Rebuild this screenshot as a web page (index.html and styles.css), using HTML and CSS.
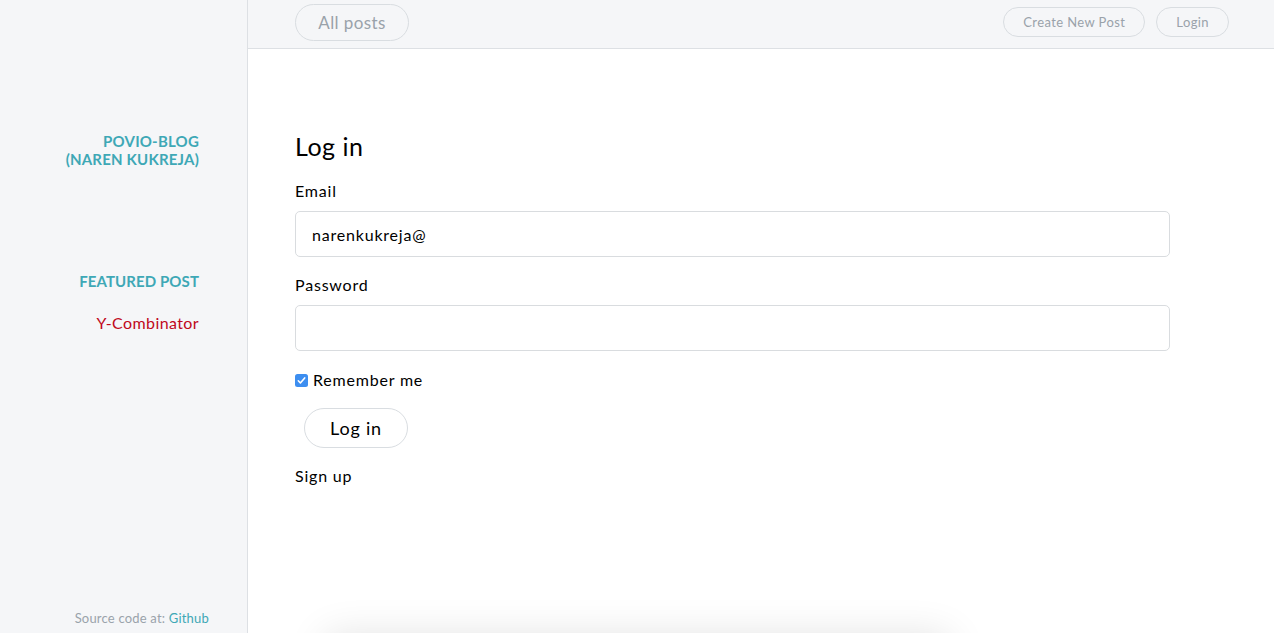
FILE: index.html
```html
<!DOCTYPE html>
<html>
<head>
<meta charset="utf-8">
<link rel="stylesheet" href="styles.css">
</head>
<body>
<div class="app">
  <aside class="sidebar">
    <div class="brand">POVIO-BLOG<br>(NAREN KUKREJA)</div>
    <div class="featured">
      <div class="featured-title">FEATURED POST</div>
      <a class="featured-link">Y-Combinator</a>
    </div>
    <div class="source">Source code at: <a class="gh">Github</a></div>
  </aside>
  <div class="main">
    <header class="topbar">
      <button class="pill pill-lg">All posts</button>
      <div class="right">
        <button class="pill pill-sm">Create New Post</button>
        <button class="pill pill-sm">Login</button>
      </div>
    </header>
    <section class="content">
      <h1 class="title">Log in</h1>
      <label class="label">Email</label>
      <input class="field" type="text" value="narenkukreja@">
      <label class="label">Password</label>
      <input class="field" type="password">
      <label class="remember"><span class="check"><svg width="13" height="13" viewBox="0 0 13 13"><rect width="13" height="13" rx="2.5" fill="#3d8ef0"/><path d="M3.3 6.8 L5.4 9 L9.7 3.9" stroke="#fff" stroke-width="1.6" fill="none" stroke-linecap="round" stroke-linejoin="round"/></svg></span>Remember me</label>
      <button class="pill submit">Log in</button>
      <a class="signup">Sign up</a>
      <div class="shadowbox"></div>
    </section>
  </div>
</div>
</body>
</html>
```
FILE: styles.css
```css
* { box-sizing: border-box; }
html, body { margin: 0; height: 100%; overflow: hidden; }
body { font-family: "Lato", "Open Sans", sans-serif; color: #111; background: #fff; letter-spacing: 0.4px; }
.app { display: flex; height: 633px; }
.sidebar {
  width: 248px; flex: none; background: #f5f6f8; border-right: 1px solid #dde0e4;
  display: flex; flex-direction: column; align-items: flex-end; padding: 132px 48px 0 0;
}
.brand { font-weight: 700; font-size: 15px; line-height: 18px; color: #3ea8b6; text-align: right; letter-spacing: 0.2px; }
.featured { margin-top: 104px; text-align: right; }
.featured-title { font-weight: 700; font-size: 15px; color: #3ea8b6; line-height: 18px; letter-spacing: 0.1px; }
.featured-link { display: block; margin-top: 23px; color: #c0081b; font-size: 16px; line-height: 20px; }
.source { margin-top: auto; margin-bottom: 7px; margin-right: -10px; font-size: 13px; color: #9aa3ab; line-height: 16px; letter-spacing: 0.2px; }
.gh { color: #3ea8b6; }
.main { flex: 1; display: flex; flex-direction: column; min-width: 0; }
.topbar {
  height: 49px; flex: none; background: #f5f6f8; border-bottom: 1px solid #dde0e4;
  display: flex; align-items: flex-start; justify-content: space-between; padding: 4px 45px 0 47px;
}
.right { display: flex; gap: 11px; padding-top: 3px; }
.pill {
  background: transparent; border: 1px solid #d9dde1; border-radius: 999px; font-family: inherit; cursor: pointer; letter-spacing: inherit;
}
.pill-lg { height: 37px; width: 114px; font-size: 17px; color: #9aa2aa; }
.pill-sm { height: 30px; padding: 0 19px; font-size: 13px; color: #9aa2aa; }
.content { padding: 82px 104px 0 47px; display: flex; flex-direction: column; align-items: flex-start; letter-spacing: 0.8px; }
.title { font-weight: 400; font-size: 25px; margin: 0; line-height: 30px; color: #000; letter-spacing: 0.5px; }
.label { font-size: 16px; line-height: 20px; margin-top: 20px; color: #000; }
.field {
  width: 875px; height: 46px; margin-top: 10px; border: 1px solid #d9dcdf; border-radius: 5px;
  padding: 0 16px; font-family: inherit; font-size: 16px; color: #000; outline: none; letter-spacing: inherit;
}
.field + .label { margin-top: 18px; }
.remember { display: flex; align-items: center; margin-top: 19px; font-size: 16px; line-height: 20px; color: #000; }
.check { display: flex; margin-right: 5px; }
.submit { margin: 18px 0 0 9px; width: 104px; height: 40px; font-size: 18px; color: #000; }
.signup { margin-top: 18px; font-size: 16px; line-height: 20px; color: #000; }
.shadowbox {
  margin: 150px 0 0 30px; width: 625px; height: 60px; border-radius: 8px; background: #fff;
  box-shadow: 0 0 40px rgba(0,0,0,0.12);
}
```
